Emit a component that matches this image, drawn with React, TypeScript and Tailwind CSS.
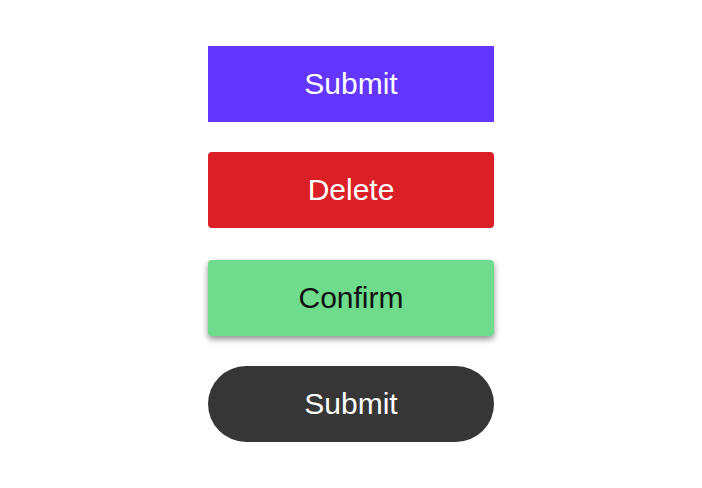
export default function App() {
  const base =
    "w-[286px] h-[76px] flex items-center justify-center text-[30px] leading-none"

  return (
    <div className="min-h-[488px] bg-white flex flex-col items-center pt-[46px] font-['Liberation_Sans',Arial,sans-serif]">
      {/* flat */}
      <button className={`${base} bg-[#6236ff] text-white`}>Submit</button>

      {/* rounded */}
      <button className={`${base} mt-[30px] bg-[#da1f27] text-white rounded-[4px]`}>
        Delete
      </button>

      {/* raised */}
      <button
        className={`${base} mt-[32px] bg-[#6edc8c] text-[#111111] rounded-[4px] shadow-[0_3px_6px_rgba(0,0,0,0.45)]`}
      >
        Confirm
      </button>

      {/* pill */}
      <button className={`${base} mt-[30px] bg-[#363636] text-white rounded-full`}>
        Submit
      </button>
    </div>
  )
}
